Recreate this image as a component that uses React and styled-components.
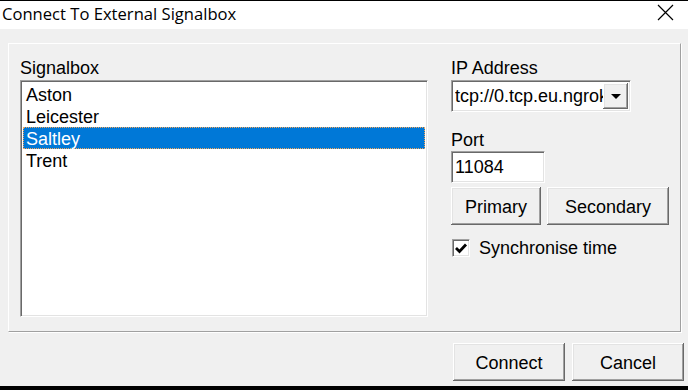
import React from 'react';
import styled, { createGlobalStyle } from 'styled-components';

const GlobalStyle = createGlobalStyle`
  html, body {
    margin: 0;
    padding: 0;
    background: #000;
  }
  body {
    font-family: "Liberation Sans", Arial, sans-serif;
    font-size: 18px;
    color: #000;
  }
  * {
    box-sizing: border-box;
  }
`;

const raised = `
  box-shadow: inset -1px -1px #696969, inset 1px 1px #ffffff,
    inset -2px -2px #a0a0a0, inset 2px 2px #e3e3e3;
`;

const sunken = `
  border: 1px solid;
  border-color: #a0a0a0 #ffffff #ffffff #a0a0a0;
  box-shadow: inset 1px 1px #696969, inset -1px -1px #e3e3e3;
`;

const Window = styled.div`
  width: 688px;
  height: 390px;
  display: flex;
  flex-direction: column;
  background: #f0f0f0;
  border-top: 1px solid #000;
  border-bottom: 4px solid #000;
`;

const TitleBar = styled.div`
  height: 28px;
  flex: none;
  display: flex;
  align-items: center;
  justify-content: space-between;
  background: #fff;
  padding: 0 14px 0 2px;
`;

const Caption = styled.span`
  font-family: "Open Sans", "Noto Sans", sans-serif;
  font-size: 16.6px;
  line-height: 28px;
  margin-top: -2px;
`;

const CloseIcon = styled.svg`
  width: 17px;
  height: 17px;
  margin-top: -6px;
`;

const Body = styled.div`
  flex: 1;
  display: flex;
  flex-direction: column;
  padding: 14px 4px 0 8px;
`;

const Group = styled.div`
  height: 289px;
  margin-right: 3px;
  display: flex;
  gap: 23px;
  padding: 13px 0 13px 11px;
  border: 1px solid;
  border-color: #ffffff #a0a0a0 #a0a0a0 #ffffff;
  box-shadow: 1px 1px 0 #ffffff;
`;

const Column = styled.div`
  width: ${({ $w }) => $w}px;
  display: flex;
  flex-direction: column;
`;

const Label = styled.div`
  line-height: 22px;
  margin-top: ${({ $mt }) => $mt || 0}px;
`;

const ListBox = styled.div`
  ${sunken}
  margin-top: 1px;
  height: 237px;
  background: #fff;
  padding: 2px 2px;
`;

const ListItem = styled.div`
  height: 22px;
  line-height: 18px;
  padding: 2px 0 0 2px;
  border: 1px ${({ $selected }) => ($selected ? 'dotted #f2a65a' : 'solid transparent')};
  background: ${({ $selected }) => ($selected ? '#0078d7' : 'transparent')};
  color: ${({ $selected }) => ($selected ? '#fff' : '#000')};
  white-space: nowrap;
`;

const Combo = styled.div`
  ${sunken}
  margin-top: 1px;
  width: 180px;
  height: 32px;
  background: #fff;
  display: flex;
  align-items: center;
  padding: 2px 2px 2px 3px;
`;

const ComboText = styled.div`
  flex: 1;
  overflow: hidden;
  white-space: nowrap;
  padding-top: 1px;
`;

const DropButton = styled.div`
  ${raised}
  width: 25px;
  height: 26px;
  flex: none;
  background: #f0f0f0;
  display: flex;
  align-items: center;
  justify-content: center;
`;

const Arrow = styled.div`
  width: 0;
  height: 0;
  border-left: 5px solid transparent;
  border-right: 5px solid transparent;
  border-top: 5px solid #000;
  margin-top: 1px;
`;

const TextField = styled.div`
  ${sunken}
  width: 94px;
  height: 32px;
  background: #fff;
  display: flex;
  align-items: center;
  padding: 1px 3px 0;
`;

const ButtonRow = styled.div`
  display: flex;
  gap: ${({ $gap }) => $gap}px;
  margin-top: ${({ $mt }) => $mt}px;
  justify-content: ${({ $end }) => ($end ? 'flex-end' : 'flex-start')};
`;

const Button = styled.button`
  ${raised}
  width: ${({ $w }) => $w}px;
  height: 38px;
  border: none;
  background: #f0f0f0;
  font-family: "Liberation Sans", Arial, sans-serif;
  font-size: 18px;
  color: #000;
  padding: 3px 0 0;
  margin: 0;
`;

const CheckRow = styled.div`
  display: flex;
  align-items: center;
  gap: 9px;
  margin-top: 12px;
  line-height: 22px;
`;

const CheckBox = styled.div`
  ${sunken}
  width: 18px;
  height: 18px;
  background: #fff;
  display: flex;
  align-items: center;
  justify-content: center;
  margin-left: 1px;
`;

const signalboxes = ['Aston', 'Leicester', 'Saltley', 'Trent'];

export default function App() {
  return (
    <>
      <GlobalStyle />
      <Window>
        <TitleBar>
          <Caption>Connect To External Signalbox</Caption>
          <CloseIcon viewBox="0 0 17 17">
            <path d="M1 1 L16 16 M16 1 L1 16" stroke="#000" strokeWidth="1.2" fill="none" />
          </CloseIcon>
        </TitleBar>
        <Body>
          <Group>
            <Column $w={408}>
              <Label>Signalbox</Label>
              <ListBox>
                {signalboxes.map((name) => (
                  <ListItem key={name} $selected={name === 'Saltley'}>
                    {name}
                  </ListItem>
                ))}
              </ListBox>
            </Column>
            <Column $w={228}>
              <Label>IP Address</Label>
              <Combo>
                <ComboText>tcp://0.tcp.eu.ngrok.io</ComboText>
                <DropButton>
                  <Arrow />
                </DropButton>
              </Combo>
              <Label $mt={17}>Port</Label>
              <TextField>11084</TextField>
              <ButtonRow $gap={6} $mt={4}>
                <Button $w={90}>Primary</Button>
                <Button $w={122}>Secondary</Button>
              </ButtonRow>
              <CheckRow>
                <CheckBox>
                  <svg width="14" height="14" viewBox="0 0 14 14">
                    <path d="M2 7 L5.5 10.5 L12 3.5" stroke="#000" strokeWidth="2.8" fill="none" />
                  </svg>
                </CheckBox>
                Synchronise time
              </CheckRow>
            </Column>
          </Group>
          <ButtonRow $gap={7} $mt={11} $end>
            <Button $w={112}>Connect</Button>
            <Button $w={112}>Cancel</Button>
          </ButtonRow>
        </Body>
      </Window>
    </>
  );
}
